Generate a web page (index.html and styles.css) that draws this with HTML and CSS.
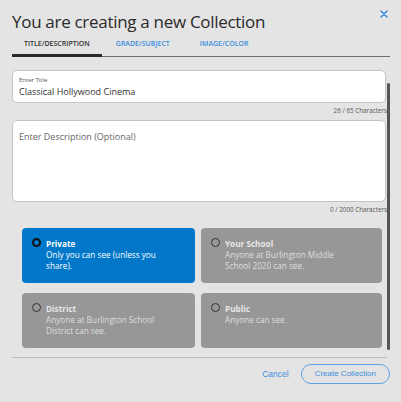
FILE: index.html
```html
<!DOCTYPE html>
<html>
<head>
<meta charset="utf-8">
<link rel="stylesheet" href="styles.css">
</head>
<body>
<div class="dialog">
  <div class="header">
    <h1 class="title">You are creating a new Collection</h1>
    <svg class="close" width="8" height="8" viewBox="0 0 8 8"><path d="M1 1L7 7M7 1L1 7" stroke="#3b8ede" stroke-width="1.6" stroke-linecap="round"/></svg>
  </div>
  <div class="tabs">
    <div class="tab active">TITLE/DESCRIPTION</div>
    <div class="tab">GRADE/SUBJECT</div>
    <div class="tab">IMAGE/COLOR</div>
  </div>
  <div class="body">
    <div class="content">
      <div class="field title-field">
        <div class="label">Enter Title</div>
        <div class="value">Classical Hollywood Cinema</div>
      </div>
      <div class="counter">26 / 65 Characters</div>
      <div class="field desc-field">
        <div class="placeholder">Enter Description (Optional)</div>
      </div>
      <div class="counter">0 / 2000 Characters</div>
      <div class="options">
        <div class="card selected">
          <span class="radio"></span>
          <div class="card-text">
            <div class="card-title">Private</div>
            <div class="card-desc">Only you can see (unless you share).</div>
          </div>
        </div>
        <div class="card">
          <span class="radio"></span>
          <div class="card-text">
            <div class="card-title">Your School</div>
            <div class="card-desc">Anyone at Burlington Middle School 2020 can see.</div>
          </div>
        </div>
        <div class="card">
          <span class="radio"></span>
          <div class="card-text">
            <div class="card-title">District</div>
            <div class="card-desc">Anyone at Burlington School District can see.</div>
          </div>
        </div>
        <div class="card">
          <span class="radio"></span>
          <div class="card-text">
            <div class="card-title">Public</div>
            <div class="card-desc">Anyone can see.</div>
          </div>
        </div>
      </div>
    </div>
    <div class="scrollbar"></div>
  </div>
  <div class="footer">
    <span class="cancel">Cancel</span>
    <span class="create">Create Collection</span>
  </div>
</div>
</body>
</html>
```
FILE: styles.css
```css
html, body {
  margin: 0;
  padding: 0;
  background: #e4e4e4;
}
body {
  font-family: "Open Sans", sans-serif;
  color: #333;
  width: 401px;
  height: 402px;
  overflow: hidden;
}
.dialog {
  padding: 0 11px 0 12px;
}
.header {
  display: flex;
  justify-content: space-between;
  align-items: flex-start;
  height: 34px;
}
.title {
  margin: 10px 0 0 0;
  font-size: 17px;
  font-weight: 400;
  line-height: 24px;
  color: #2a2a2a;
  letter-spacing: -0.3px;
}
.close {
  margin-top: 10px;
  margin-right: 2px;
}
.tabs {
  display: flex;
  border-bottom: 1px solid #6d6d6d;
  height: 22px;
  align-items: stretch;
}
.tab {
  font-size: 7px;
  font-weight: 600;
  color: #3b8ede;
  padding: 0 12px;
  line-height: 20px;
  margin-bottom: -1px;
  border-bottom: 3px solid transparent;
  margin-right: 2px;
}
.tab:nth-child(2) { margin-right: 6px; }
.tab.active {
  color: #333;
  border-bottom-color: #2a2a2a;
}
.body {
  display: flex;
  margin-top: 13px;
  height: 287px;
}
.content {
  width: 375px;
}
.scrollbar {
  width: 3px;
  margin-top: 13px;
  height: 267px;
  background: #555;
  border-radius: 2px;
}
.field {
  background: #fff;
  border: 1px solid #c4c4c4;
  border-radius: 5px;
  box-sizing: border-box;
  width: 374px;
  padding: 0 6px;
}
.title-field {
  height: 33px;
  padding-top: 5px;
}
.label {
  font-size: 6px;
  line-height: 8px;
  color: #555;
}
.value {
  font-size: 9px;
  line-height: 14px;
  color: #333;
  margin-top: 1px;
}
.counter {
  text-align: right;
  font-size: 6.3px;
  line-height: 8px;
  color: #555;
  margin: 4px 0 5px;
  white-space: nowrap;
}
.desc-field {
  height: 82px;
  padding-top: 9px;
}
.placeholder {
  font-size: 9px;
  line-height: 14px;
  color: #666;
}
.options {
  display: grid;
  grid-template-columns: 173px 181px;
  grid-auto-rows: 55px;
  gap: 10px 6px;
  margin: 14px 0 0 10px;
}
.card {
  display: flex;
  align-items: flex-start;
  background: #979797;
  border-radius: 4px;
  padding: 10px 10px 0 10px;
  box-sizing: border-box;
}
.card.selected {
  background: #0077c8;
}
.radio {
  width: 9px;
  height: 9px;
  box-sizing: border-box;
  border: 1px solid #333;
  border-radius: 50%;
  flex: none;
  margin-right: 5px;
}
.card.selected .radio {
  border: 2px solid #111;
}
.card-text {
  font-size: 8.2px;
  line-height: 11px;
  color: #e6e6e6;
  margin-top: 0;
}
.card.selected .card-text {
  color: #fff;
}
.card-title {
  font-weight: 700;
}
.card-desc {
  max-width: 122px;
  color: #dedede;
}
.card.selected .card-desc {
  color: #fff;
}
.footer {
  display: flex;
  justify-content: flex-end;
  align-items: center;
  border-top: 1px solid #bcbcbc;
  margin-right: 3px;
  padding-top: 6px;
  font-family: "Liberation Sans", Arial, sans-serif;
  font-size: 8px;
}
.cancel {
  color: #3b8ede;
  margin-right: 12px;
  font-size: 8.5px;
}
.create {
  color: #3b8ede;
  border: 1px solid #5aa2e4;
  border-radius: 10px;
  height: 20px;
  box-sizing: border-box;
  line-height: 18px;
  padding: 0 13px;
  margin-right: -3px;
}
```
